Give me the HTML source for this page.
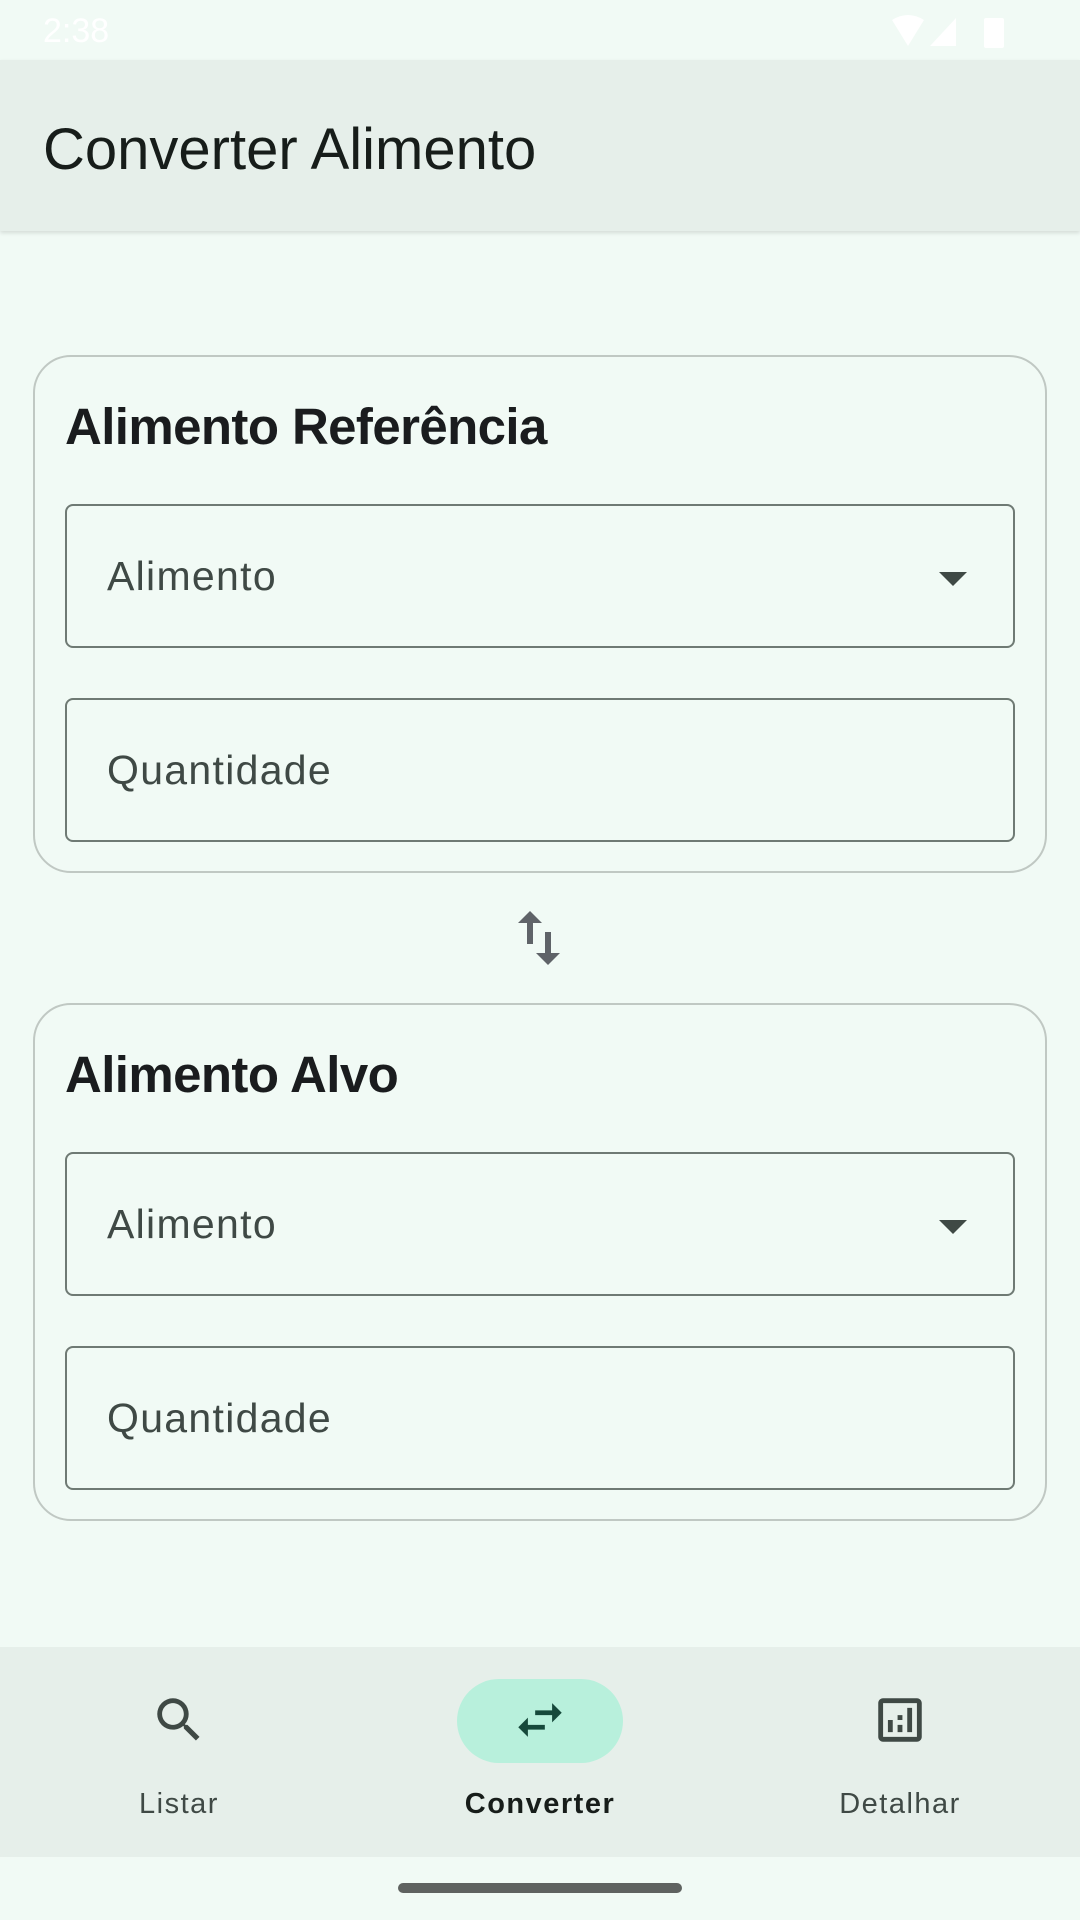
<!DOCTYPE html>
<html><head><meta charset="utf-8"><style>
*{margin:0;padding:0;box-sizing:border-box}
body{width:1080px;height:1920px;background:#f1faf5;font-family:"Liberation Sans",sans-serif;position:relative;overflow:hidden}
.abs{position:absolute}
.appbar{left:0;top:60px;width:1080px;height:171px;background:#e6efea;box-shadow:0 2px 4px rgba(0,0,0,.12)}
.title{left:43px;top:121px;font-size:58px;color:#171d1a;line-height:1}
.card{left:33px;width:1014px;height:518px;border:2px solid #c0c8c3;border-radius:38px}
.h{left:65px;font-size:51px;font-weight:bold;color:#1a1c1e;line-height:1;letter-spacing:-0.6px}
.field{left:65px;width:950px;height:144px;border:2.5px solid #6f7a74;border-radius:8px}
.lbl{position:absolute;left:40px;top:50px;font-size:41px;color:#3f4945;letter-spacing:1.3px;line-height:1}
.arrow{position:absolute;right:46px;top:66px;width:0;height:0;border-left:14px solid transparent;border-right:14px solid transparent;border-top:14px solid #3f4945}
.nav{left:0;top:1647px;width:1080px;height:210px;background:#e6efea}
.nl{font-size:29px;color:#3f4945;letter-spacing:1.5px;text-align:center;width:300px;top:1790px;line-height:1}
</style></head><body>
<div class="abs" style="left:43px;top:12px;font-size:34px;color:#fff">2:38</div>
<svg class="abs" style="left:890px;top:14px" width="120" height="34" viewBox="0 0 120 34"><path fill="#fff" d="M2 6 Q18 -4 34 6 L18 32Z"/><path fill="#fff" d="M40 32 L66 4 L66 32Z"/><rect x="94" y="4" width="20" height="30" rx="2" fill="#fff"/></svg>
<div class="abs appbar"></div>
<div class="abs title">Converter Alimento</div>

<div class="abs card" style="top:355px"></div>
<div class="abs h" style="top:401px">Alimento Referência</div>
<div class="abs field" style="top:504px"><div class="lbl">Alimento</div><div class="arrow"></div></div>
<div class="abs field" style="top:698px"><div class="lbl">Quantidade</div></div>

<svg class="abs" style="left:503px;top:902px" width="72" height="72" viewBox="0 0 24 24"><path fill="#5f6368" d="M16 17.01V10h-2v7.01h-3L15 21l4-3.99h-3zM9 3L5 6.99h3V14h2V6.99h3L9 3z"/></svg>

<div class="abs card" style="top:1003px"></div>
<div class="abs h" style="top:1049px">Alimento Alvo</div>
<div class="abs field" style="top:1152px"><div class="lbl">Alimento</div><div class="arrow"></div></div>
<div class="abs field" style="top:1346px"><div class="lbl">Quantidade</div></div>

<div class="abs nav"></div>
<svg class="abs" style="left:150px;top:1691px" width="58" height="58" viewBox="0 0 24 24"><path fill="#3f4945" d="M15.5 14h-.79l-.28-.27A6.47 6.47 0 0016 9.5 6.5 6.5 0 109.5 16c1.61 0 3.090-.59 4.230-1.57l.27.28v.79l5 4.99L20.490 19l-4.990-5zm-6 0C7.010 14 5 11.990 5 9.500S7.010 5 9.500 5 14 7.010 14 9.500 11.990 14 9.500 14z"/></svg>
<div class="abs" style="left:457px;top:1679px;width:166px;height:84px;border-radius:42px;background:#b8f0dc"></div>
<svg class="abs" style="left:511px;top:1691px" width="58" height="58" viewBox="0 0 24 24"><path fill="#16493b" d="M6.99 11L3 15l3.99 4v-3H14v-2H6.99v-3zM21 9l-3.99-4v3H10v2h7.01v3L21 9z"/></svg>
<svg class="abs" style="left:871px;top:1691px" width="58" height="58" viewBox="0 0 24 24"><path fill="#3f4945" d="M19 3H5c-1.1 0-2 .9-2 2v14c0 1.1.9 2 2 2h14c1.1 0 2-.9 2-2V5c0-1.1-.9-2-2-2zm0 16H5V5h14v14zM7 12h2v5H7zm8-5h2v10h-2zm-4 7h2v3h-2zm0-4h2v2h-2z"/></svg>
<div class="abs nl" style="left:29px">Listar</div>
<div class="abs nl" style="left:390px;font-weight:bold;color:#171d1a">Converter</div>
<div class="abs nl" style="left:750px">Detalhar</div>
<div class="abs" style="left:398px;top:1883px;width:284px;height:10px;border-radius:5px;background:#5f6260"></div>
</body></html>
